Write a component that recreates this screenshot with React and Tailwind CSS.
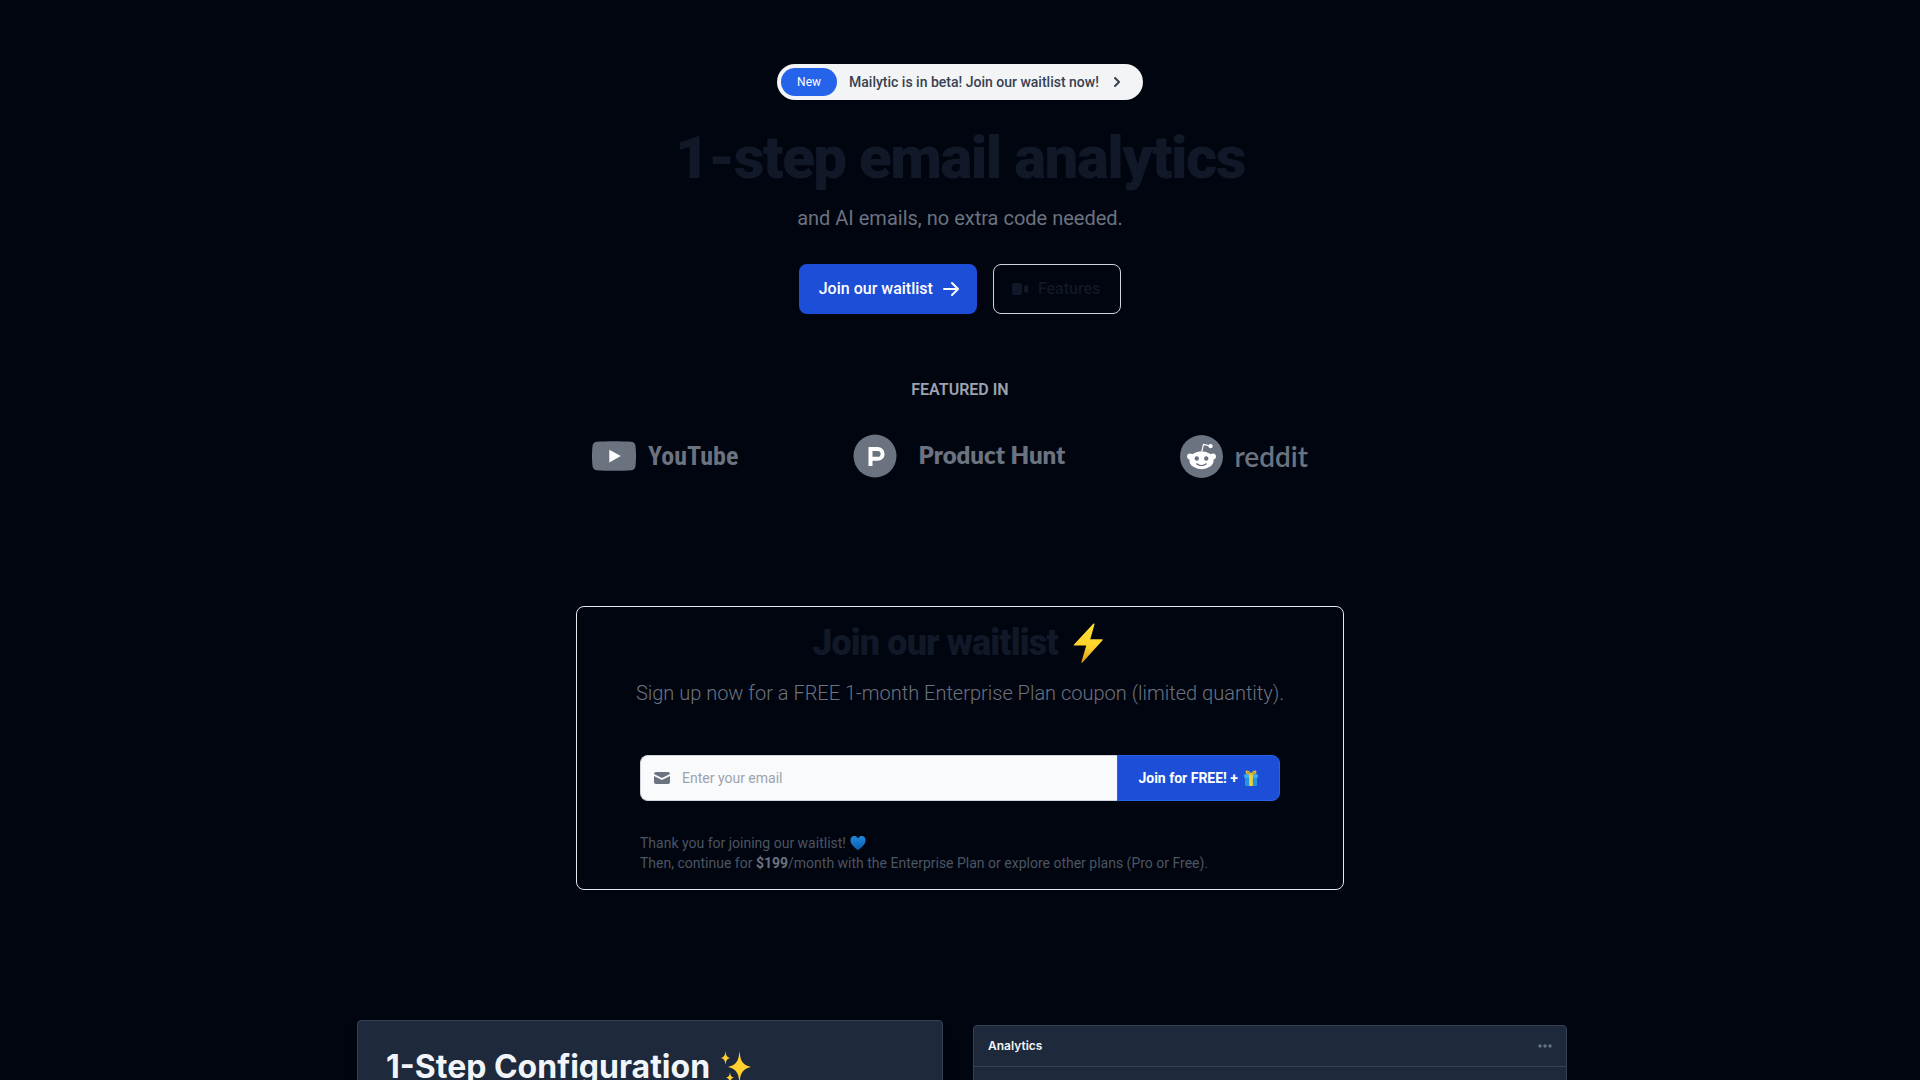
import React from "react";

function Bolt() {
  return (
    <svg viewBox="0 0 40 40" className="h-10 w-10 shrink-0" aria-hidden="true">
      <defs>
        <linearGradient id="bolt" x1="0" y1="0" x2="0" y2="1">
          <stop offset="0" stopColor="#ffe030" />
          <stop offset="0.6" stopColor="#ffd22e" />
          <stop offset="1" stopColor="#d99a16" />
        </linearGradient>
      </defs>
      <path d="M25.500.6 6 21.600c-.4.5-.1 1 .5 1h11.800L13.400 39c-.2.8.5 1.100 1 .5L34.600 17.300c.4-.5.1-1.100-.5-1.100H22.300L26.500 1.200c.2-.7-.5-1.100-1-.6Z" fill="url(#bolt)" />
    </svg>
  );
}

function Gift() {
  return (
    <svg viewBox="0 0 16 16" className="h-4 w-4" aria-hidden="true">
      <path d="M2 6.500h12v8.700q0 .8-.8.8H2.800q-.8 0-.8-.8z" fill="#2496dc" />
      <path d="M1.200 4.200h13.600v3.600H1.200z" fill="#3fb0ee" />
      <path d="M6.200 4.200h3.600V16H6.200z" fill="#f5cf3a" />
      <path d="M8 4.800C5.500 4.800 2.200 3.800 2.600 1.600 3-.4 6.500.8 8 3.600 9.500.8 13-.4 13.400 1.600c.4 2.200-2.900 3.200-5.400 3.200Z" fill="#e6c02f" />
      <path d="M4 1.900c1-.4 2.200.4 2.900 1.600C5.400 3.500 4 2.900 4 1.900Zm8 0c-1-.4-2.200.4-2.900 1.600 1.500 0 2.900-.6 2.900-1.600Z" fill="#9b8a1e" />
    </svg>
  );
}

function Heart() {
  return (
    <svg viewBox="0 0 16 16" className="h-4 w-4" aria-hidden="true">
      <defs>
        <linearGradient id="heart" x1="0" y1="0" x2="0" y2="1">
          <stop offset="0" stopColor="#2089dd" />
          <stop offset="1" stopColor="#0b5cab" />
        </linearGradient>
      </defs>
      <path d="M8 3.400C7 1.600 5.700 1 4.200 1 1.900 1 .4 2.900.4 5.200c0 4 4.200 7.600 7.600 9.900 3.400-2.300 7.600-5.900 7.600-9.900C15.600 2.900 14.100 1 11.800 1 10.300 1 9 1.600 8 3.400Z" fill="url(#heart)" />
    </svg>
  );
}

function Sparkles() {
  return (
    <svg viewBox="0 0 30 32" className="h-8 w-8" aria-hidden="true">
      <g fill="#ffd02f">
        <path d="M18.500 0c.9 9.500 2.600 13.800 11.500 16-8.900 2.200-10.600 6.500-11.500 16C17.600 22.500 15.900 18.200 7 16 15.900 13.800 17.600 9.500 18.500 0Z" />
        <path d="M4.500 0c.5 4.600 1.300 6 4.500 7-3.200 1-4 2.400-4.500 7C4 9.400 3.200 8 0 7c3.200-1 4-2.400 4.500-7Z" />
        <path d="M9 21c.4 3.500 1.200 5 4.200 5.700-3 .7-3.800 1.800-4.200 5.300-.4-3.500-1.200-4.600-4.200-5.300C7.800 26 8.600 24.500 9 21Z" />
      </g>
    </svg>
  );
}

function YouTubeLogo() {
  return (
    <a href="#youtube" aria-label="YouTube" className="mr-5 flex h-11 items-center gap-3">
      <svg viewBox="0 0 44 30" className="h-[30px] w-11" aria-hidden="true">
        <path d="M4.500.8C14 0 30 0 39.500.8c2.400.3 3.800 2 4 4.200.7 7 .7 13 0 20-.2 2.200-1.600 3.900-4 4.200-9.500.8-25.500.8-35 0-2.400-.3-3.800-2-4-4.200-.7-7-.7-13 0-20 .2-2.200 1.600-3.900 4-4.200Z" fill="#6b7280" />
        <path d="m17.300 8.700 11.500 6.400-11.500 6.400z" fill="#fff" />
      </svg>
      <span className="font-['Liberation_Sans_Narrow','Roboto_Condensed','Roboto'] text-[26px] leading-8 font-bold">YouTube</span>
    </a>
  );
}

function ProductHuntLogo() {
  return (
    <a href="#producthunt" aria-label="Product Hunt" className="mr-5 flex h-11 items-center gap-[22px]">
      <svg viewBox="0 0 44 44" className="h-11 w-11" aria-hidden="true">
        <circle cx="22" cy="22" r="21.500" fill="#6b7280" />
        <path d="M17.500 32V15h7.200a4.900 4.900 0 0 1 0 9.800h-7.200" fill="none" stroke="#fff" strokeWidth="4" />
      </svg>
      <span className="pb-0.5 font-['Lato'] text-2xl leading-8 font-extrabold">Product Hunt</span>
    </a>
  );
}

function RedditLogo() {
  return (
    <a href="#reddit" aria-label="reddit" className="mr-5 flex h-11 items-center gap-3">
      <svg viewBox="0 0 128 128" className="h-[43px] w-[43px]" aria-hidden="true">
        <circle cx="64" cy="64" r="64" fill="#6b7280" />
        <path d="m65 49 5-21 21 5" fill="none" stroke="#fff" strokeWidth="3.500" strokeLinejoin="round" />
        <g fill="#fff">
          <circle cx="91" cy="33" r="6.500" />
          <circle cx="30" cy="64" r="9" />
          <circle cx="98" cy="64" r="9" />
          <ellipse cx="64" cy="75" rx="36" ry="27" />
        </g>
        <g fill="#6b7280">
          <circle cx="50" cy="70" r="6.500" />
          <circle cx="78" cy="70" r="6.500" />
        </g>
        <path d="M50 86q14 10 28 0" fill="none" stroke="#6b7280" strokeWidth="4" strokeLinecap="round" />
      </svg>
      <span className="font-['Lato'] text-[28px] leading-8 font-semibold">reddit</span>
    </a>
  );
}

function Hero() {
  return (
    <section className="mx-auto flex w-full max-w-3xl flex-col items-center px-4 pt-16 text-center">
      <a href="#waitlist" className="mb-7 flex items-center rounded-full bg-[#f3f4f6] p-1 pr-4 text-sm text-[#374151]">
        <span className="mr-3 rounded-full bg-[#2563eb] px-4 py-1.5 text-xs text-white">New</span>
        <span className="font-medium">Mailytic is in beta! Join our waitlist now!</span>
        <svg viewBox="0 0 20 20" fill="currentColor" className="ml-2 h-5 w-5" aria-hidden="true">
          <path fillRule="evenodd" clipRule="evenodd" d="M7.293 14.707a1 1 0 010-1.414L10.586 10 7.293 6.707a1 1 0 011.414-1.414l4 4a1 1 0 010 1.414l-4 4a1 1 0 01-1.414 0z" />
        </svg>
      </a>
      <h1 className="mb-4 text-6xl leading-none font-black tracking-tight text-[#111827]">1-step email analytics</h1>
      <p className="mb-8 text-xl text-[#6b7280]">and AI emails, no extra code needed.</p>
      <div className="mb-16 flex gap-4">
        <a href="#waitlist" className="flex items-center rounded-lg bg-[#1d4ed8] px-5 py-3 text-base font-medium text-white">
          Join our waitlist
          <svg viewBox="0 0 20 20" fill="currentColor" className="-mr-1 ml-2 h-5 w-5" aria-hidden="true">
            <path fillRule="evenodd" clipRule="evenodd" d="M10.293 3.293a1 1 0 011.414 0l6 6a1 1 0 010 1.414l-6 6a1 1 0 01-1.414-1.414L14.586 11H3a1 1 0 110-2h11.586l-4.293-4.293a1 1 0 010-1.414z" />
          </svg>
        </a>
        <a href="#features" className="flex items-center rounded-lg border border-[#d1d5db] px-5 py-3 text-base font-medium text-[#111827]">
          <svg viewBox="0 0 20 20" fill="currentColor" className="mr-2 -ml-1 h-5 w-5" aria-hidden="true">
            <path d="M2 6a2 2 0 012-2h6a2 2 0 012 2v8a2 2 0 01-2 2H4a2 2 0 01-2-2V6zM14.553 7.106A1 1 0 0014 8v4a1 1 0 00.553.894l2 1A1 1 0 0018 13V7a1 1 0 00-1.447-.894l-2 1z" />
          </svg>
          Features
        </a>
      </div>
      <span className="font-semibold text-[#9ca3af]">FEATURED IN</span>
      <div className="mt-8 flex w-full flex-wrap items-center justify-between text-[#6b7280]">
        <YouTubeLogo />
        <ProductHuntLogo />
        <RedditLogo />
      </div>
    </section>
  );
}

function Waitlist() {
  return (
    <section id="waitlist" className="mx-auto mt-32 w-full max-w-3xl rounded-lg border border-[#e5e7eb] px-4 py-4">
      <h2 className="mb-4 flex items-center justify-center gap-2.5 text-4xl leading-10 font-black tracking-tight text-[#111827]">
        Join our waitlist <Bolt />
      </h2>
      <p className="mb-12 text-center text-xl font-light text-[#6b7280]">Sign up now for a FREE 1-month Enterprise Plan coupon (limited quantity).</p>
      <form className="mx-auto max-w-screen-sm" onSubmit={(e) => e.preventDefault()}>
        <div className="flex w-full">
          <label className="flex grow items-center gap-2.5 rounded-l-lg border border-r-0 border-[#d1d5db] bg-[#f9fafb] pl-[11px]">
            <svg viewBox="0 0 20 20" fill="currentColor" className="h-5 w-5 shrink-0 text-[#6b7280]" role="img" aria-label="Email address">
              <path d="M2.003 5.884L10 9.882l7.997-3.998A2 2 0 0016 4H4a2 2 0 00-1.997 1.884z" />
              <path d="M18 8.118l-8 4-8-4V14a2 2 0 002 2h12a2 2 0 002-2V8.118z" />
            </svg>
            <input type="email" placeholder="Enter your email" className="w-full bg-transparent py-3 text-sm text-[#111827] outline-none placeholder:text-[#9ca3af]" />
          </label>
          <button type="submit" className="flex shrink-0 items-center gap-[5px] rounded-r-lg border border-[#2563eb] bg-[#1d4ed8] px-5 py-3 text-sm font-bold text-white">
            Join for FREE! + <Gift />
          </button>
        </div>
        <div className="mt-8 text-sm text-[#4b5563]">
          <p className="flex items-center gap-1">Thank you for joining our waitlist! <Heart /></p>
          <p>
            Then, continue for <strong className="text-[#6b7280]">$199</strong>/month with the Enterprise Plan or explore other plans (Pro or Free).
          </p>
        </div>
      </form>
    </section>
  );
}

function Showcase() {
  return (
    <section id="features" className="mx-auto mt-[130px] flex w-full max-w-[1214px] items-start gap-[30px] pl-1 font-['Inter',sans-serif]">
      <article className="w-[586px] shrink-0 rounded-sm border border-[#334155] bg-[#1e293b] p-7 shadow-lg">
        <h2 className="flex items-center gap-2.5 text-[32px] leading-9 font-bold text-[#f1f5f9]">
          1-Step Configuration <Sparkles />
        </h2>
      </article>
      <article className="mt-[5px] grow rounded-sm border border-[#334155] bg-[#1e293b] pb-12">
        <header className="flex items-center justify-between border-b border-[#334155] px-[14px] py-3">
          <h3 className="text-xs font-semibold text-[#f1f5f9]">Analytics</h3>
          <button type="button" aria-label="More options" className="text-[#64748b]">
            <svg viewBox="0 0 14 4" fill="currentColor" className="h-1 w-[14px]" aria-hidden="true">
              <circle cx="2" cy="2" r="1.700" /><circle cx="7" cy="2" r="1.700" /><circle cx="12" cy="2" r="1.700" />
            </svg>
          </button>
        </header>
      </article>
    </section>
  );
}

export default function App() {
  return (
    <main className="h-screen overflow-hidden bg-[#01050f] font-['Roboto',sans-serif]">
      <Hero />
      <Waitlist />
      <Showcase />
    </main>
  );
}
